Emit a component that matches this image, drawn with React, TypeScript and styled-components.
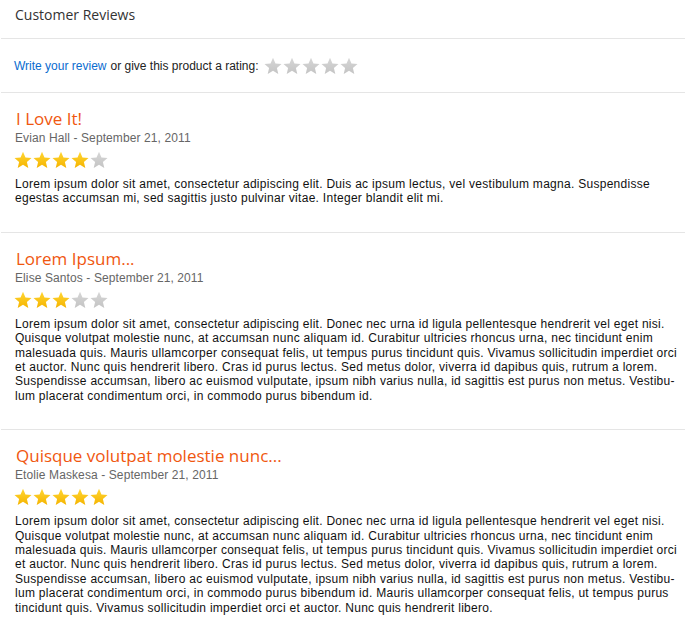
import React from 'react';
import styled, { createGlobalStyle } from 'styled-components';

interface Review {
  title: string;
  author: string;
  date: string;
  rating: number;
  body: string;
}

const LOREM_LONG =
  'Lorem ipsum dolor sit amet, consectetur adipiscing elit. Donec nec urna id ligula pellentesque hendrerit vel eget nisi. Quisque volutpat molestie nunc, at accumsan nunc aliquam id. Curabitur ultricies rhoncus urna, nec tincidunt enim malesuada quis. Mauris ullamcorper consequat felis, ut tempus purus tincidunt quis. Vivamus sollicitudin imperdiet orci et auctor. Nunc quis hendrerit libero. Cras id purus lectus. Sed metus dolor, viverra id dapibus quis, rutrum a lorem. Suspendisse accumsan, libero ac euismod vulputate, ipsum nibh varius nulla, id sagittis est purus non metus. Vestibu\u00ADlum placerat condimentum orci, in commodo purus bibendum id.';

const reviews: Review[] = [
  {
    title: 'I Love It!',
    author: 'Evian Hall',
    date: 'September 21, 2011',
    rating: 4,
    body: 'Lorem ipsum dolor sit amet, consectetur adipiscing elit. Duis ac ipsum lectus, vel vestibulum magna. Suspendisse egestas accumsan mi, sed sagittis justo pulvinar vitae. Integer blandit elit mi.',
  },
  {
    title: 'Lorem Ipsum...',
    author: 'Elise Santos',
    date: 'September 21, 2011',
    rating: 3,
    body: LOREM_LONG,
  },
  {
    title: 'Quisque volutpat molestie nunc...',
    author: 'Etolie Maskesa',
    date: 'September 21, 2011',
    rating: 5,
    body:
      LOREM_LONG +
      ' Mauris ullamcorper consequat felis, ut tempus purus tincidunt quis. Vivamus sollicitudin imperdiet orci et auctor. Nunc quis hendrerit libero.',
  },
];

const GlobalStyle = createGlobalStyle`
  body {
    margin: 0;
    background: #fff;
    font-family: "Liberation Sans", Arial, sans-serif;
  }
`;

const STAR_PATH = 'M9 0.8l2.45 5.6 6.05 0.55-4.6 4 1.38 5.95L9 13.75 3.72 16.9l1.38-5.95-4.6-4 6.05-0.55z';

const Star: React.FunctionComponent<{ filled: boolean; id: string }> = ({ filled, id }) => (
  <StarSvg viewBox="0 0 18 18" width="18" height="18">
    <defs>
      <linearGradient id={id} x1="0" y1="0" x2="0" y2="1">
        <stop offset="0" stopColor={filled ? '#ffd633' : '#d6d6d6'} />
        <stop offset="1" stopColor={filled ? '#f5b400' : '#c4c4c4'} />
      </linearGradient>
    </defs>
    <path d={STAR_PATH} fill={`url(#${id})`} />
  </StarSvg>
);

const Stars: React.FunctionComponent<{ rating: number; name: string }> = ({ rating, name }) => (
  <StarRow>
    {[0, 1, 2, 3, 4].map((i) => (
      <Star key={i} filled={i < rating} id={`${name}-${i}`} />
    ))}
  </StarRow>
);

const App: React.FunctionComponent = () => (
  <>
    <GlobalStyle />
    <Page>
      <Header>Customer Reviews</Header>

      <RatingBar>
        <Link href="#">Write your review</Link>
        <RatingText>or give this product a rating:</RatingText>
        <Stars rating={0} name="rate" />
      </RatingBar>

      {reviews.map((review, index) => (
        <ReviewItem key={review.title}>
          <ReviewTitle>{review.title}</ReviewTitle>
          <Meta>
            {review.author} - {review.date}
          </Meta>
          <Stars rating={review.rating} name={`review${index}`} />
          <Body>{review.body}</Body>
        </ReviewItem>
      ))}
    </Page>
  </>
);

const Page = styled.div`
  width: 685px;
  padding-left: 1px;
  box-sizing: border-box;
`;

const Header = styled.h2`
  margin: 0;
  height: 39px;
  padding: 6px 0 0 14px;
  box-sizing: border-box;
  border-bottom: 1px solid #e5e5e5;
  font-family: "Open Sans", "Noto Sans", sans-serif;
  font-weight: 400;
  font-size: 14px;
  line-height: 18px;
  color: #333;
`;

const RatingBar = styled.div`
  display: flex;
  align-items: center;
  height: 53px;
  padding-left: 13px;
  border-bottom: 1px solid #e5e5e5;
  font-size: 12px;
  color: #222;
`;

const Link = styled.a`
  color: #0a6ccf;
  text-decoration: none;
`;

const RatingText = styled.span`
  margin: 0 5px 0 4px;
`;

const StarRow = styled.div`
  display: flex;
  gap: 1px;
`;

const StarSvg = styled.svg`
  display: block;
`;

const ReviewItem = styled.section`
  padding: 15px 4px 26px 13px;
  border-bottom: 1px solid #e5e5e5;

  &:last-child {
    border-bottom: none;
  }
`;

const ReviewTitle = styled.h3`
  margin: 0 0 0 2px;
  font-family: "Open Sans", "Noto Sans", sans-serif;
  font-weight: 400;
  font-size: 17px;
  line-height: 21px;
  color: #f0570f;
`;

const Meta = styled.div`
  margin: 1px 0 5px 1px;
  font-size: 12px;
  line-height: 16px;
  letter-spacing: 0.1px;
  color: #666;
`;

const Body = styled.p`
  margin: 8px 0 0 1px;
  font-size: 12px;
  line-height: 14.4px;
  letter-spacing: 0.28px;
  color: #111;
  hyphens: manual;
`;

export default App;
